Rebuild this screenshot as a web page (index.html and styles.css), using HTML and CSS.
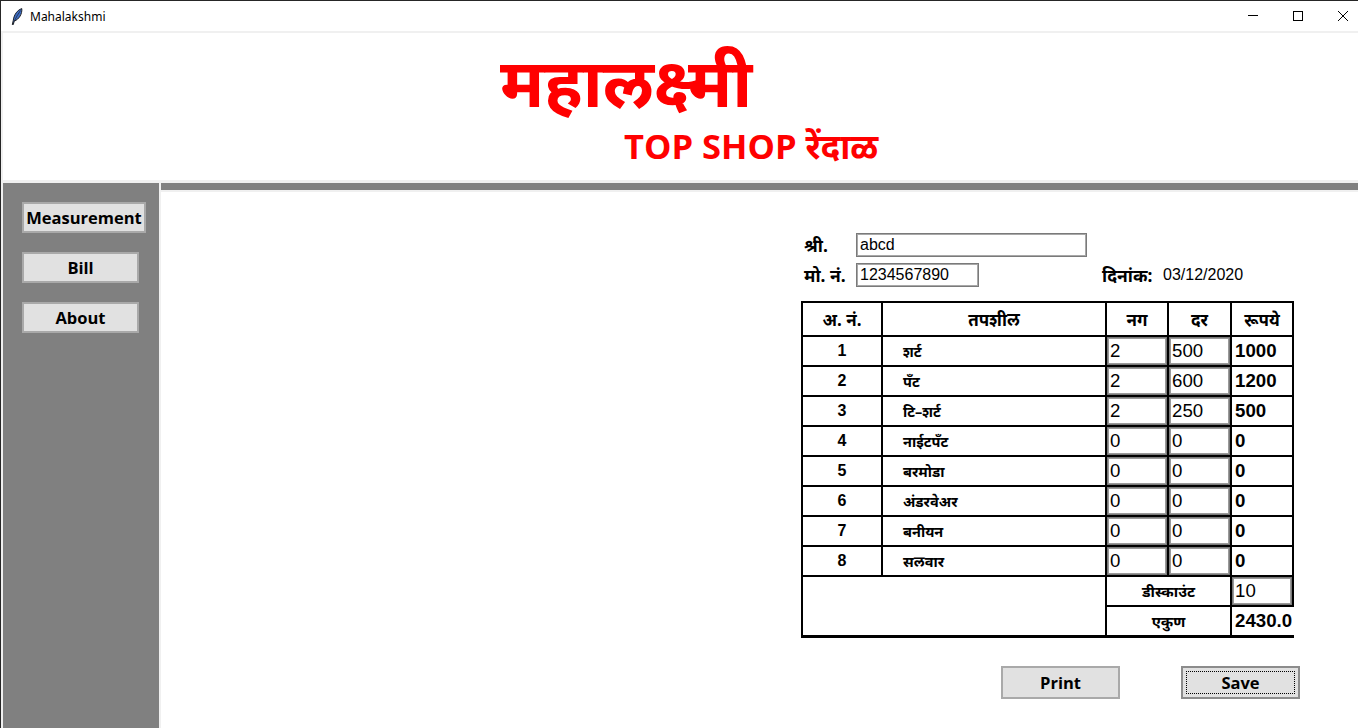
FILE: index.html
```html
<!DOCTYPE html>
<html lang="mr">
<head>
<meta charset="utf-8">
<title>Mahalakshmi</title>
<link rel="stylesheet" href="styles.css">
</head>
<body>
<div class="window">
  <div class="titlebar">
    <svg class="feather" width="12" height="17" viewBox="0 0 12 17">
      <path d="M10.8 0.6 C6.5 2 3 6.5 2.3 12.2 L1.3 16.6 L2.3 16.6 L3.2 13.2 C8.2 11.2 11.3 6 10.8 0.6 Z" fill="#3f6fc6" stroke="#101010" stroke-width="0.9" stroke-linejoin="round"/>
      <path d="M9.5 2.5 C7 6 5 9.5 3.4 13" fill="none" stroke="#101010" stroke-width="0.6"/>
    </svg>
    <span class="title">Mahalakshmi</span>
    <div class="controls">
      <svg width="10" height="10" viewBox="0 0 10 10"><path d="M0 4.5 H10" stroke="#000" stroke-width="1"/></svg>
      <svg width="10" height="10" viewBox="0 0 10 10"><rect x="0.5" y="0.5" width="9" height="9" fill="none" stroke="#000" stroke-width="1"/></svg>
      <svg width="10" height="10" viewBox="0 0 10 10"><path d="M0 0 L10 10 M10 0 L0 10" stroke="#000" stroke-width="1"/></svg>
    </div>
  </div>
  <div class="client">
    <header class="banner">
      <div class="brand">महालक्ष्मी</div>
      <div class="sub">TOP SHOP रेंदाळ</div>
    </header>
    <div class="lower">
      <nav class="sidebar">
        <button class="nav-btn wide">Measurement</button>
        <button class="nav-btn">Bill</button>
        <button class="nav-btn">About</button>
      </nav>
      <main class="main">
        <div class="main-bar"></div>
        <div class="content">
          <div class="form-row">
            <span class="lbl">श्री.</span><span class="entry name">abcd</span>
          </div>
          <div class="form-row">
            <span class="lbl">मो. नं.</span><span class="entry phone">1234567890</span>
            <span class="date-lbl">दिनांक:</span><span class="date">03/12/2020</span>
          </div>
          <div class="bill-table">
            <div class="c head">अ. नं.</div>
            <div class="c head">तपशील</div>
            <div class="c head">नग</div>
            <div class="c head">दर</div>
            <div class="c head">रूपये</div>

            <div class="c sn">1</div><div class="c item">शर्ट</div><div class="c in">2</div><div class="c in">500</div><div class="c amt">1000</div>
            <div class="c sn">2</div><div class="c item">पँट</div><div class="c in">2</div><div class="c in">600</div><div class="c amt">1200</div>
            <div class="c sn">3</div><div class="c item">टि–शर्ट</div><div class="c in">2</div><div class="c in">250</div><div class="c amt">500</div>
            <div class="c sn">4</div><div class="c item">नाईटपँट</div><div class="c in">0</div><div class="c in">0</div><div class="c amt">0</div>
            <div class="c sn">5</div><div class="c item">बरमोडा</div><div class="c in">0</div><div class="c in">0</div><div class="c amt">0</div>
            <div class="c sn">6</div><div class="c item">अंडरवेअर</div><div class="c in">0</div><div class="c in">0</div><div class="c amt">0</div>
            <div class="c sn">7</div><div class="c item">बनीयन</div><div class="c in">0</div><div class="c in">0</div><div class="c amt">0</div>
            <div class="c sn">8</div><div class="c item">सलवार</div><div class="c in">0</div><div class="c in">0</div><div class="c amt">0</div>

            <div class="c blank"></div>
            <div class="c lab2">डीस्काउंट</div><div class="c in disc">10</div>
            <div class="c lab2">एकुण</div><div class="c amt total">2430.0</div>
          </div>
          <div class="actions">
            <button class="act print">Print</button>
            <button class="act save"><span class="focus">Save</span></button>
          </div>
        </div>
      </main>
    </div>
  </div>
</div>
</body>
</html>
```

FILE: styles.css
```css
* { box-sizing: border-box; }

body {
  margin: 0;
  width: 1358px;
  height: 728px;
  overflow: hidden;
  background: #f0f0f0;
  font-family: "Liberation Sans", Arial, sans-serif;
  color: #000;
}

.window {
  height: 728px;
  display: flex;
  flex-direction: column;
  border-top: 1px solid #262626;
  border-left: 1px solid #262626;
}

/* title bar */
.titlebar {
  height: 30px;
  flex: none;
  background: #fff;
  display: flex;
  align-items: center;
}
.feather { margin-left: 10px; flex: none; }
.title {
  margin-left: 7px;
  font-family: "Noto Sans", "Open Sans", sans-serif;
  font-size: 12px;
}
.controls {
  margin-left: auto;
  display: flex;
  align-items: center;
  gap: 35px;
  padding-right: 10px;
  align-self: flex-start;
  padding-top: 10px;
}
.controls svg { display: block; }

/* client area */
.client {
  flex: 1;
  display: flex;
  flex-direction: column;
  padding: 2px 0 0 2px;
  min-height: 0;
}

.banner {
  height: 147px;
  flex: none;
  background: #fff;
  color: #ff0000;
  font-family: "Open Sans", "Noto Sans", "Noto Sans Devanagari", "Lohit Devanagari", "FreeSans", sans-serif;
  font-weight: 700;
  display: flex;
  flex-direction: column;
}
.brand {
  margin-left: 497px;
  margin-top: 8px;
  font-size: 68px;
  line-height: 80px;
}
.sub {
  margin-left: 621px;
  margin-top: 5px;
  font-size: 34.5px;
  line-height: 40px;
}

.lower {
  margin-top: 3px;
  flex: 1;
  display: flex;
  gap: 2px;
  min-height: 0;
}

.sidebar {
  width: 156px;
  flex: none;
  background: #808080;
  padding: 19px 0 0 19px;
  display: flex;
  flex-direction: column;
  align-items: flex-start;
  gap: 19px;
}
.nav-btn, .act {
  background: #e1e1e1;
  border: 2px solid #a9a9a9;
  font-family: "Open Sans", "Noto Sans", sans-serif;
  font-weight: 700;
  font-size: 16.5px;
  color: #000;
  padding: 0;
  height: 31px;
  width: 117px;
}
.nav-btn.wide { width: 124px; }

.main {
  flex: 1;
  display: flex;
  flex-direction: column;
}
.main-bar {
  height: 7px;
  flex: none;
  background: #808080;
  margin-bottom: 2px;
}
.content {
  flex: 1;
  background: #fff;
  padding: 41px 0 0 640px;
}

/* form */
.form-row {
  display: flex;
  align-items: center;
  height: 24px;
  margin-bottom: 6px;
}
.lbl, .date-lbl, .head, .item, .lab2 {
  font-family: "Noto Sans", "Noto Sans Devanagari", "Lohit Devanagari", "FreeSans", sans-serif;
  font-weight: 700;
}
.lbl {
  width: 55px;
  padding-left: 3px;
  font-size: 17.5px;
}
.entry {
  height: 24px;
  border: 1px solid #7a7a7a;
  box-shadow: inset 0 0 0 1px #a8a8a8;
  font-size: 16px;
  line-height: 22px;
  padding-left: 3px;
}
.entry.name { width: 231px; }
.entry.phone { width: 123px; }
.date-lbl {
  margin-left: 123px;
  width: 61px;
  font-size: 17.5px;
}
.date { font-size: 16px; }

/* table */
.bill-table {
  margin-top: 14px;
  display: grid;
  grid-template-columns: 78px 222px 60px 61px 60px;
  grid-template-rows: 32px repeat(10, 28px);
  gap: 2px;
  padding: 2px 2px 3px 2px;
  background: #000;
  width: max-content;
}
.c {
  background: #fff;
  display: flex;
  align-items: center;
  overflow: hidden;
  white-space: nowrap;
}
.head {
  justify-content: center;
  font-size: 17px;
}
.sn {
  justify-content: center;
  font-weight: 700;
  font-size: 16px;
}
.item {
  padding-left: 20px;
  font-size: 14.5px;
}
.in {
  border: 1px solid #7a7a7a;
  box-shadow: inset 0 0 0 1px #9a9a9a;
  font-size: 14pt;
  padding-left: 2px;
}
.amt {
  font-weight: 700;
  font-size: 14pt;
  padding-left: 3px;
}
.blank { grid-column: 1 / 3; grid-row: span 2; }
.lab2 {
  grid-column: 3 / 5;
  justify-content: center;
  font-size: 15px;
}
.total { margin-right: -3px; }

/* actions */
.actions {
  display: flex;
  margin-top: 28px;
}
.act {
  width: 119px;
  height: 33px;
}
.print { margin-left: 200px; }
.save {
  margin-left: 61px;
  padding: 3px;
  border-color: #8c8c8c;
}
.save .focus {
  display: flex;
  align-items: center;
  justify-content: center;
  width: 100%;
  height: 100%;
  border: 1px dotted #000;
}
```
